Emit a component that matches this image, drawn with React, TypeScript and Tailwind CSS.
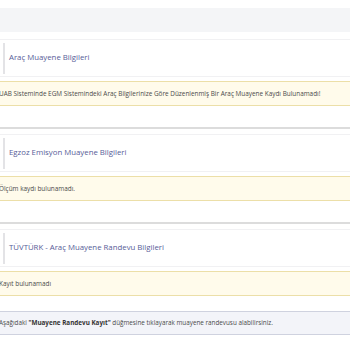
export default function App() {
  const sections = [
    {
      title: 'Araç Muayene Bilgileri',
      message:
        'UAB Sisteminde EGM Sistemindeki Araç Bilgilerinize Göre Düzenlenmiş Bir Araç Muayene Kaydı Bulunamadı!',
    },
    { title: 'Egzoz Emisyon Muayene Bilgileri', message: 'Ölçüm kaydı bulunamadı.' },
    { title: 'TÜVTÜRK - Araç Muayene Randevu Bilgileri', message: 'Kayıt bulunamadı' },
  ];

  return (
    <div
      className="w-[350px] h-[350px] overflow-hidden bg-white"
      style={{ fontFamily: '"Open Sans", "Noto Sans", sans-serif' }}
    >
      <div className="h-[8px]" />
      <div className="h-[24px] bg-[#f4f5f7]" />

      {sections.map((s, i) => (
        <div key={s.title}>
          {i === 0 ? (
            <div className="h-[7px]" />
          ) : (
            <>
              <div className="h-[21px]" />
              <div className="h-[2px] bg-[#dcdcdc]" />
              <div className="h-[5px]" />
            </>
          )}

          {/* Header */}
          <div className="h-[38px] border-y border-[#f1f1f3] bg-white flex items-center">
            <div className="ml-[3px] w-[2px] h-[31px] bg-[#e3e3e6]" />
            <span className="ml-[4px] text-[7.8px] text-[#575d98] whitespace-nowrap">{s.title}</span>
          </div>

          {/* Alert */}
          <div className="mt-[4px] h-[25px] border-y border-[#ecdfa8] bg-[#fffbeb] flex items-center">
            <span className="-ml-[1px] text-[6.4px] text-[#4a4a4a] whitespace-nowrap">{s.message}</span>
          </div>
        </div>
      ))}

      <div className="mt-[15px] h-[24px] border-y border-[#cfd2df] bg-[#f3f4f9] flex items-center">
        <span className="-ml-[1px] text-[6.32px] text-[#4a4a4a] whitespace-nowrap">
          Aşağıdaki <b className="text-[#333]">"Muayene Randevu Kayıt"</b> düğmesine tıklayarak muayene
          randevusu alabilirsiniz.
        </span>
      </div>
    </div>
  );
}
